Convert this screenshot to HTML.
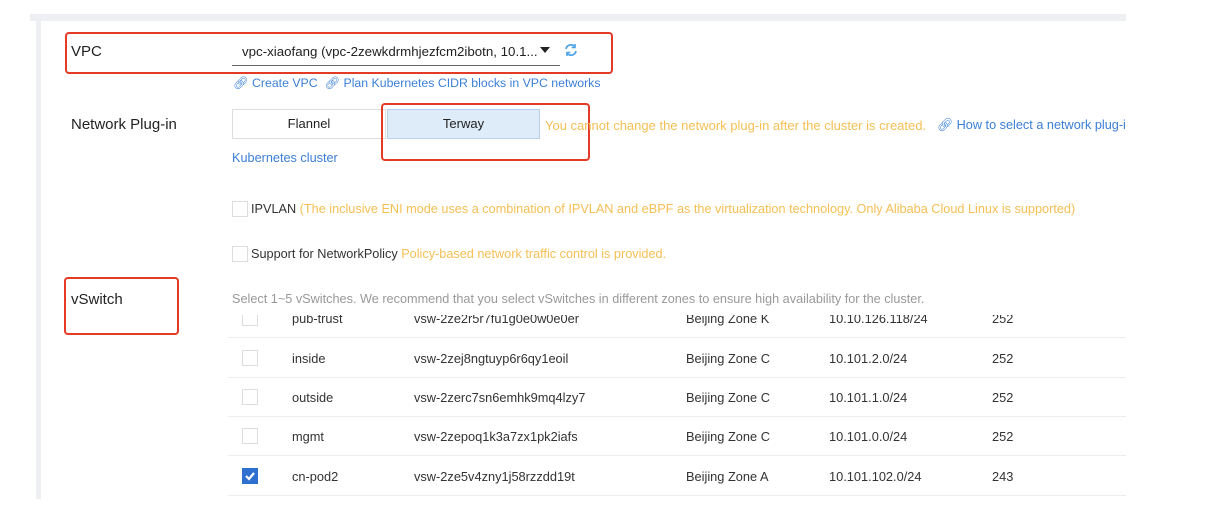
<!DOCTYPE html>
<html><head><meta charset="utf-8"><style>
*{margin:0;padding:0;box-sizing:border-box}
body{width:1225px;height:511px;background:#fff;font-family:"Liberation Sans",sans-serif;position:relative;overflow:hidden;color:#333}
.a{position:absolute;white-space:nowrap}
.lbl{font-size:15px;color:#222}
.s{font-size:12.7px}
.blue{color:#3b7fd6}
.org{color:#f5bf54}
.gray{color:#999}
.red{position:absolute;border:2px solid #e43b26;border-radius:4px}
.cb{position:absolute;width:16px;height:16px;border:1px solid #ddd;background:#fff}
.row{position:absolute;left:228px;width:898px;border-bottom:1px solid #eee;height:39px}
.row span{position:absolute;top:12px;font-size:12.8px;color:#333}
</style></head><body>
<div class="a" style="left:30px;top:14px;width:1096px;height:7px;background:#eeeff3"></div>
<div class="a" style="left:36px;top:14px;width:5px;height:485px;background:#eeeff3"></div>

<div class="a lbl" style="left:71px;top:43px">VPC</div>
<div class="a" style="left:232px;top:38px;width:328px;height:28px;border-bottom:1px solid #666"></div>
<div class="a" style="left:242px;top:44px;font-size:13.3px;color:#222">vpc-xiaofang (vpc-2zewkdrmhjezfcm2ibotn, 10.1...</div>
<div class="a" style="left:540px;top:47px;width:0;height:0;border-left:5px solid transparent;border-right:5px solid transparent;border-top:6px solid #222"></div>
<svg class="a" style="left:564px;top:43px" width="14" height="14" viewBox="0 0 14 14"><path d="M2 6a5 5 0 0 1 9-2M12 8a5 5 0 0 1-9 2" stroke="#4fa5e8" stroke-width="1.8" fill="none"/><path d="M11 1v3.5H7.5M3 13V9.5h3.5" stroke="#4fa5e8" stroke-width="1.6" fill="none"/></svg>
<div class="red" style="left:65px;top:32px;width:548px;height:42px"></div>
<div class="a blue" style="left:233px;top:76px;font-size:12.3px">🔗︎ Create VPC &nbsp;🔗︎ Plan Kubernetes CIDR blocks in VPC networks</div>

<div class="a lbl" style="left:71px;top:116px">Network Plug-in</div>
<div class="a" style="left:232px;top:109px;width:154px;height:30px;border:1px solid #ddd;font-size:13px;text-align:center;line-height:28px;color:#222">Flannel</div>
<div class="a" style="left:387px;top:109px;width:153px;height:30px;border:1px solid #b8d0ee;background:#deebf8;font-size:13px;text-align:center;line-height:28px;color:#222">Terway</div>
<div class="red" style="left:381px;top:103px;width:209px;height:58px"></div>
<div class="a org" style="left:545px;top:118px;font-size:13px">You cannot change the network plug-in after the cluster is created.</div>
<div class="a s blue" style="left:937px;top:118px;width:189px;overflow:hidden">🔗︎ How to select a network plug-in</div>
<div class="a s blue" style="left:232px;top:151px">Kubernetes cluster</div>

<div class="cb" style="left:232px;top:201px"></div>
<div class="a s" style="left:251px;top:202px;color:#333">IPVLAN <span class="org">(The inclusive ENI mode uses a combination of IPVLAN and eBPF as the virtualization technology. Only Alibaba Cloud Linux is supported)</span></div>
<div class="cb" style="left:232px;top:246px"></div>
<div class="a s" style="left:251px;top:247px;color:#333">Support for NetworkPolicy <span class="org">Policy-based network traffic control is provided.</span></div>

<div class="a lbl" style="left:71px;top:291px">vSwitch</div>
<div class="red" style="left:64px;top:277px;width:115px;height:58px"></div>
<div class="a s gray" style="left:232px;top:292px">Select 1~5 vSwitches. We recommend that you select vSwitches in different zones to ensure high availability for the cluster.</div>

<div class="a" style="left:228px;top:315px;width:898px;height:24px;overflow:hidden">
<div class="row" style="left:0;top:-16px"><span style="left:64px">pub-trust</span><span style="left:186px">vsw-2ze2r5r7fu1g0e0w0e0er</span><span style="left:458px">Beijing Zone K</span><span style="left:601px">10.10.126.118/24</span><span style="left:764px">252</span><div class="cb" style="left:14px;top:11px"></div></div>
</div>
<div class="row" style="top:339px"><div class="cb" style="left:14px;top:11px"></div><span style="left:64px">inside</span><span style="left:186px">vsw-2zej8ngtuyp6r6qy1eoil</span><span style="left:458px">Beijing Zone C</span><span style="left:601px">10.101.2.0/24</span><span style="left:764px">252</span></div>
<div class="row" style="top:378px"><div class="cb" style="left:14px;top:11px"></div><span style="left:64px">outside</span><span style="left:186px">vsw-2zerc7sn6emhk9mq4lzy7</span><span style="left:458px">Beijing Zone C</span><span style="left:601px">10.101.1.0/24</span><span style="left:764px">252</span></div>
<div class="row" style="top:417px"><div class="cb" style="left:14px;top:11px"></div><span style="left:64px">mgmt</span><span style="left:186px">vsw-2zepoq1k3a7zx1pk2iafs</span><span style="left:458px">Beijing Zone C</span><span style="left:601px">10.101.0.0/24</span><span style="left:764px">252</span></div>
<div class="row" style="top:457px"><div class="cb" style="left:14px;top:11px;background:#2f6fd0;border-color:#2f6fd0"><svg width="14" height="14" viewBox="0 0 14 14" style="position:absolute;left:0;top:0"><path d="M3 7l3 3 5-6" stroke="#fff" stroke-width="2.2" fill="none"/></svg></div><span style="left:64px">cn-pod2</span><span style="left:186px">vsw-2ze5v4zny1j58rzzdd19t</span><span style="left:458px">Beijing Zone A</span><span style="left:601px">10.101.102.0/24</span><span style="left:764px">243</span></div>
</body></html>
